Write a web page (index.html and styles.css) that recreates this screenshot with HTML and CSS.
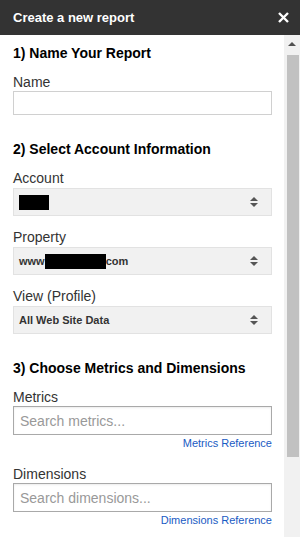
FILE: index.html
```html
<!DOCTYPE html>
<html lang="en">

<head>
  <meta charset="UTF-8">
  <meta name="viewport" content="width=device-width, initial-scale=1.0">
  <title>Create a new report</title>

  <link rel="stylesheet" href="styles.css">
</head>

<body>
  <div id="sidebar">
    <div id="header">
      <span class="title">Create a new report</span>
      <svg class="close" width="11" height="11" viewBox="0 0 11 11">
        <path d="M1 1L10 10M10 1L1 10" stroke="#fff" stroke-width="2.4" />
      </svg>
    </div>

    <div id="main">
      <div id="content">
        <h2>1) Name Your Report</h2>
        <label class="fieldLabel">Name</label>
        <input class="textInput nameInput" type="text" />

        <h2 class="section">2) Select Account Information</h2>
        <label class="fieldLabel">Account</label>
        <div class="select">
          <span class="redacted accountBox"></span>
          <span class="arrows"></span>
        </div>

        <label class="fieldLabel spaced">Property</label>
        <div class="select">
          <span>www</span><span class="redacted propertyBox"></span><span>com</span>
          <span class="arrows"></span>
        </div>

        <label class="fieldLabel spaced">View (Profile)</label>
        <div class="select">
          <span>All Web Site Data</span>
          <span class="arrows"></span>
        </div>

        <h2 class="section">3) Choose Metrics and Dimensions</h2>
        <label class="fieldLabel">Metrics</label>
        <input class="textInput searchInput" type="text" placeholder="Search metrics..." />
        <div class="refLink"><a href="#">Metrics Reference</a></div>

        <label class="fieldLabel spacedMore">Dimensions</label>
        <input class="textInput searchInput" type="text" placeholder="Search dimensions..." />
        <div class="refLink"><a href="#">Dimensions Reference</a></div>
      </div>

      <div id="scrollbar">
        <div class="scrollUp"></div>
        <div class="thumb"></div>
      </div>
    </div>
  </div>
</body>

</html>
```

FILE: styles.css
```css
body {
  margin: 0px;
  background-color: #fff;
  font-family: "Liberation Sans", Arial, sans-serif;
  color: #333;
}

#sidebar {
  display: flex;
  flex-direction: column;
  height: 537px;
  overflow: hidden;
}

#header {
  display: flex;
  align-items: center;
  justify-content: space-between;
  height: 35px;
  flex-shrink: 0;
  padding: 0px 11px 0px 13px;
  background-color: #333;
  color: #fff;
}

#header .title {
  font-size: 13px;
  font-weight: bold;
}

#main {
  display: flex;
  flex: 1;
  min-height: 0;
}

#content {
  flex: 1;
  display: flex;
  flex-direction: column;
  padding: 9px 12px 0px 13px;
  border-left: 1px solid #ececec;
  margin-left: -1px;
  overflow: hidden;
}

h2 {
  margin: 0px;
  font-size: 14px;
  line-height: 18px;
  font-weight: bold;
  color: #000;
}

h2.section {
  margin-top: 25px;
}

.fieldLabel {
  display: block;
  margin-top: 11px;
  font-size: 14px;
  line-height: 18px;
  color: #333;
}

.fieldLabel.spaced {
  margin-top: 12px;
}

.fieldLabel.spacedMore {
  margin-top: 15px;
}

.textInput {
  box-sizing: border-box;
  width: 100%;
  margin: 0px;
  font-family: "Liberation Sans", Arial, sans-serif;
  font-size: 14px;
  outline: none;
}

.nameInput {
  height: 24px;
  border: 1px solid #d0d0d0;
}

.searchInput {
  height: 29px;
  padding: 0px 6px;
  border: 1px solid #a9a9a9;
  box-shadow: inset 0px 1px 2px rgba(0, 0, 0, 0.08);
}

.searchInput::placeholder {
  color: #999;
}

.select {
  position: relative;
  display: flex;
  align-items: center;
  box-sizing: border-box;
  height: 28px;
  margin-top: 1px;
  padding: 0px 5px;
  background-color: #f1f1f1;
  border: 1px solid #e2e2e2;
  font-size: 11px;
  font-weight: bold;
  color: #333;
}

.redacted {
  display: inline-block;
  height: 15px;
  background-color: #000;
}

.accountBox {
  width: 30px;
}

.propertyBox {
  width: 61px;
}

.arrows {
  position: absolute;
  right: 12px;
  top: 8px;
  width: 9px;
  height: 10px;
}

.arrows::before,
.arrows::after {
  content: "";
  position: absolute;
  left: 0px;
  border-left: 4.5px solid transparent;
  border-right: 4.5px solid transparent;
}

.arrows::before {
  top: 0px;
  border-bottom: 4px solid #555;
}

.arrows::after {
  bottom: 0px;
  border-top: 4px solid #555;
}

.refLink {
  margin-top: 2px;
  text-align: right;
  font-size: 11px;
  line-height: 13px;
}

.refLink a {
  color: #1a5bc4;
  text-decoration: none;
}

#scrollbar {
  display: flex;
  flex-direction: column;
  align-items: center;
  width: 16px;
  flex-shrink: 0;
  background-color: #f1f1f1;
}

.scrollUp {
  width: 0px;
  height: 0px;
  margin-top: 7px;
  border-left: 4px solid transparent;
  border-right: 4px solid transparent;
  border-bottom: 4px solid #505050;
}

.thumb {
  width: 12px;
  height: 402px;
  margin-top: 9px;
  margin-left: 1px;
  background-color: #c1c1c1;
}
```
